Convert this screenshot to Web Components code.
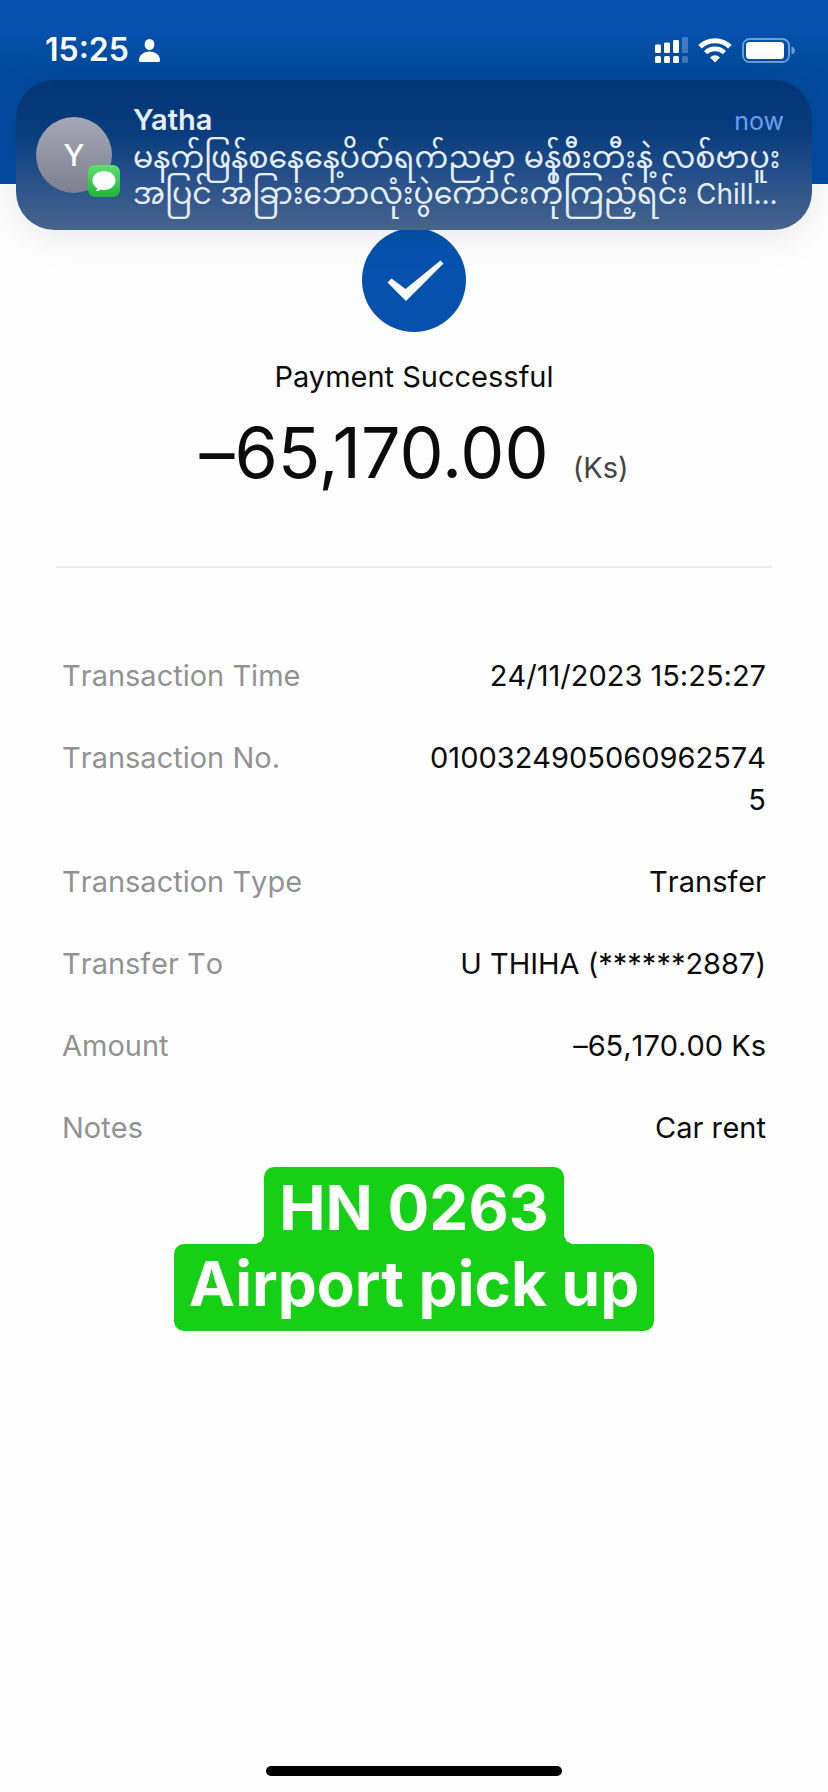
<!DOCTYPE html>
<html lang="en">
<head>
<meta charset="utf-8">
<meta name="viewport" content="width=device-width, initial-scale=1">
<title>Payment receipt</title>
<style>
  body { margin: 0; background: #fefefe; font-family: Inter, "Noto Sans Myanmar", "Noto Sans", sans-serif; color: #0c0c0c; }
</style>
</head>
<body>
<receipt-page>
  <status-bar slot="top" time="15:25"></status-bar>
  <push-notification slot="banner" initial="Y">
    <span slot="sender">Yatha</span>
    <span slot="when">now</span>
    <span slot="line1" lang="my">မနက်ဖြန်စနေနေ့ပိတ်ရက်ညမှာ မန်စီးတီးနဲ့ လစ်ဗာပူး</span>
    <span slot="line2" lang="my">အပြင် အခြားဘောလုံးပွဲကောင်းကိုကြည့်ရင်း <span lang="en" style="font-size: 28px">Chill...</span></span>
  </push-notification>
  <payment-summary>
    <span slot="title">Payment Successful</span>
    <span slot="amount">–65,170.00</span>
    <span slot="unit">(Ks)</span>
  </payment-summary>
  <detail-list>
    <detail-row label="Transaction Time">24/11/2023 15:25:27</detail-row>
    <detail-row label="Transaction No.">01003249050609625745</detail-row>
    <detail-row label="Transaction Type">Transfer</detail-row>
    <detail-row label="Transfer To">U THIHA (******2887)</detail-row>
    <detail-row label="Amount">–65,170.00 Ks</detail-row>
    <detail-row label="Notes">Car rent</detail-row>
  </detail-list>
  <caption-sticker>
    <span slot="first">HN 0263</span>
    <span slot="second">Airport pick up</span>
  </caption-sticker>
  <home-indicator slot="bottom"></home-indicator>
</receipt-page>
<script>
const define = (name, html, setup) => customElements.define(name, class extends HTMLElement {
  constructor() {
    super();
    this.attachShadow({ mode: "open" }).innerHTML = html;
    if (setup) setup(this, this.shadowRoot);
  }
});

define("receipt-page", `
  <style>
    :host { display: flex; flex-direction: column; min-height: 100vh; position: relative; }
    .banner { position: absolute; top: 80px; left: 16px; right: 16px; }
    main { display: flex; flex-direction: column; }
    footer { margin-top: auto; }
  </style>
  <slot name="top"></slot>
  <main><slot></slot></main>
  <div class="banner"><slot name="banner"></slot></div>
  <footer><slot name="bottom"></slot></footer>`);

define("status-bar", `
  <style>
    :host { display: block; height: 184px; box-sizing: border-box; padding: 30px 33px 0 45px; color: #fff;
            background: linear-gradient(#0752b1 0, #0551ac 30px, #004b9c 72px, #004b9f 130px, #004ca2 184px); }
    .row { display: flex; justify-content: space-between; align-items: center; height: 40px; }
    .side { display: flex; align-items: center; gap: 10px; }
    time { font-size: 32px; font-weight: 600; line-height: 40px; }
    svg { display: block; }
  </style>
  <div class="row">
    <div class="side">
      <time></time>
      <svg width="21" height="23" viewBox="0 0 21 23" fill="#fff" role="img" aria-label="Profile">
        <ellipse cx="10.500" cy="5.500" rx="4.900" ry="5.500"/>
        <path d="M0 21.500C0 16 4.500 12.500 10.500 12.500S21 16 21 21.500Q21 23 19.500 23H1.500Q0 23 0 21.500Z"/>
      </svg>
    </div>
    <div class="side">
      <svg width="33" height="26" viewBox="0 0 33 26" fill="#fff" role="img" aria-label="Signal">
        <rect x="0" y="7.500" width="6" height="8.500" rx="1.200"/><rect x="9" y="5.500" width="6" height="10.500" rx="1.200"/><rect x="18" y="3" width="6" height="13" rx="1.200"/>
        <rect x="0" y="19" width="6" height="7" rx="1.500"/><rect x="9" y="19" width="6" height="7" rx="1.500"/><rect x="18" y="19" width="6" height="7" rx="1.500"/>
        <g opacity=".25"><rect x="27" y="0" width="6" height="16" rx="1.200"/><rect x="27" y="19" width="6" height="7" rx="1.500"/></g>
      </svg>
      <svg width="34" height="25" viewBox="0 0 34 25" fill="none" stroke="#fff" role="img" aria-label="Wi-Fi">
        <path d="M2 8.800A21.500 21.500 0 0 1 32 8.800" stroke-width="5"/>
        <path d="M7.600 14.700A13.500 13.500 0 0 1 26.400 14.700" stroke-width="4.600"/>
        <path d="M12 19.400Q17 15.300 22 19.400L17 24.500Z" fill="#fff" stroke="none"/>
      </svg>
      <svg width="53" height="25" viewBox="0 0 53 25" role="img" aria-label="Battery">
        <rect x="1" y="1" width="46" height="23" rx="6.500" fill="none" stroke="#6b9bd8" stroke-width="2"/>
        <rect x="4" y="4" width="38" height="17" rx="3.500" fill="#fff"/>
        <path d="M49.500 8.500Q53 10 53 12.500T49.500 16.500Z" fill="#6b9bd8"/>
      </svg>
    </div>
  </div>`, (el, root) => { root.querySelector("time").textContent = el.getAttribute("time"); });

define("push-notification", `
  <style>
    :host { display: flex; box-sizing: border-box; height: 150px; padding: 20px 28px 0 20px; gap: 21px; border-radius: 38px; color: #e4eefb;
            background: linear-gradient(#023576 0, #083c7c 35%, #27508a 65%, #46658c 100%);
            box-shadow: 0 4px 40px rgba(0,0,0,.1); }
    .avatar { position: relative; flex: none; width: 76px; height: 76px; margin-top: 17px; border-radius: 50%;
              display: flex; align-items: center; justify-content: center;
              background: linear-gradient(#a5a6b7, #7f808f); color: #fff; font-size: 30px; font-weight: 500; }
    svg { position: absolute; left: 52px; top: 48px; }
    .text { flex: 1; min-width: 0; }
    .head { display: flex; justify-content: space-between; align-items: baseline; line-height: 40px; height: 39px; }
    .sender { font-size: 29px; font-weight: 600; }
    .when { font-size: 25px; color: #66a0f2; }
    .line { font-size: 30px; line-height: 36px; height: 36px; white-space: nowrap; }
  </style>
  <div class="avatar"><span></span>
    <svg width="32" height="32" viewBox="0 0 32 32" role="img" aria-label="Messages">
      <defs><linearGradient id="g" x1="0" y1="0" x2="0" y2="1"><stop offset="0" stop-color="#5de06c"/><stop offset="1" stop-color="#1fb537"/></linearGradient></defs>
      <rect width="32" height="32" rx="7" fill="url(#g)"/>
      <path d="M16 6C9.500 6 4.500 10.200 4.500 15.500c0 3.300 1.900 6.100 4.800 7.800-.3 1.300-.9 2.200-1.800 3 2.200 0 3.900-.7 5.200-1.700 1 .2 2.200.4 3.300.4 6.500 0 11.500-4.200 11.500-9.500S22.500 6 16 6Z" fill="#fff"/>
    </svg>
  </div>
  <div class="text">
    <div class="head"><slot class="sender" name="sender"></slot><slot class="when" name="when"></slot></div>
    <div class="line"><slot name="line1"></slot></div>
    <div class="line"><slot name="line2"></slot></div>
  </div>`, (el, root) => { root.querySelector(".avatar span").textContent = el.getAttribute("initial"); });

define("payment-summary", `
  <style>
    :host { display: flex; flex-direction: column; align-items: center; margin: 0 56px; padding-top: 44px; height: 338px;
            border-bottom: 2px solid #ececec; font-feature-settings: "calt" 0; }
    svg { display: block; }
    .title { font-size: 29px; line-height: 40px; margin-top: 25px; }
    .amount { display: flex; align-items: baseline; gap: 24px; font-size: 70px; line-height: 84px; margin-top: 14px; }
    .unit { font-size: 29px; color: #444; }
  </style>
  <svg width="104" height="104" viewBox="0 0 104 104" role="img" aria-label="Success">
    <circle cx="52" cy="52" r="52" fill="#0552ae"/>
    <path d="M25.500 54.500L29.500 50.500L43.500 61L78.500 32.500L81.500 35.500L44 73Z" fill="#fff"/>
  </svg>
  <div class="title"><slot name="title"></slot></div>
  <div class="amount"><slot name="amount"></slot><span class="unit"><slot name="unit"></slot></span></div>`);

define("detail-list", `
  <style>:host { display: flex; flex-direction: column; gap: 40px; padding: 87px 62px 0; }</style>
  <slot></slot>`);

define("detail-row", `
  <style>
    :host { display: flex; justify-content: space-between; font-size: 29px; line-height: 42px; font-kerning: none; font-feature-settings: "calt" 0; }
    .label { color: #929292; }
    .value { width: 50%; text-align: right; overflow-wrap: anywhere; }
  </style>
  <span class="label"></span><span class="value"><slot></slot></span>`,
  (el, root) => { root.querySelector(".label").textContent = el.getAttribute("label"); });

define("caption-sticker", `
  <style>
    :host { display: flex; flex-direction: column; align-items: center; margin-top: 18px; color: #fff; font-size: 62px; font-weight: 700; }
    div { background: #15d015; padding: 0 15px; white-space: nowrap; }
    .first { position: relative; height: 77px; line-height: 82px; border-radius: 10px 10px 0 0; }
    .first::before, .first::after { content: ""; position: absolute; bottom: 0; width: 10px; height: 10px; }
    .first::before { right: 100%; background: radial-gradient(circle at 0 0, transparent 10px, #15d015 10px); }
    .first::after { left: 100%; background: radial-gradient(circle at 100% 0, transparent 10px, #15d015 10px); }
    .second { height: 87px; line-height: 80px; border-radius: 10px; }
  </style>
  <div class="first"><slot name="first"></slot></div>
  <div class="second"><slot name="second"></slot></div>`);

define("home-indicator", `
  <style>
    :host { display: flex; justify-content: center; padding-bottom: 16px; }
    div { width: 296px; height: 10px; border-radius: 5px; background: #000; }
  </style><div></div>`);
</script>
</body>
</html>
